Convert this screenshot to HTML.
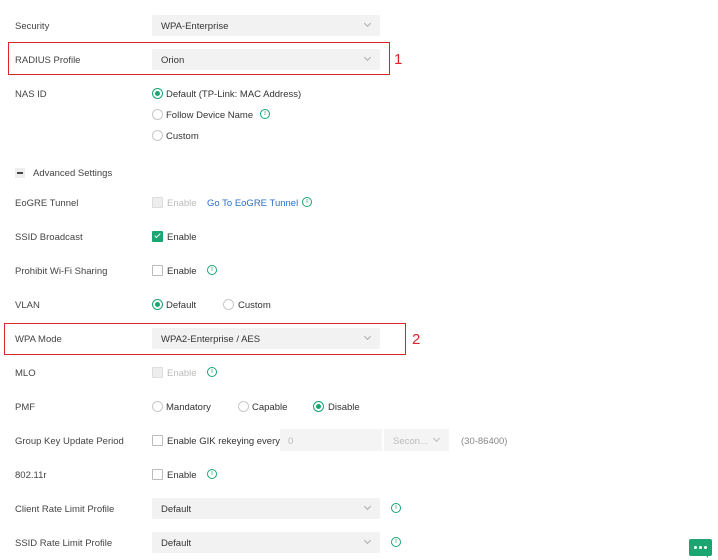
<!DOCTYPE html>
<html><head><meta charset="utf-8"><style>
body{margin:0;width:718px;height:560px;background:#fff;font-family:"Liberation Sans",sans-serif;font-size:9.5px;color:#333;position:relative;overflow:hidden}
.a{position:absolute;white-space:nowrap;line-height:12px;margin-top:1px}
.lbl{left:15px;color:#444;margin-top:2px}
.sel{position:absolute;left:152px;width:228px;height:21px;background:#f2f2f2;border-radius:2px}
.sel span{position:absolute;left:9px;top:6px;color:#333}
.sel i{position:absolute;right:10px;top:6px;width:4px;height:4px;border-right:1px solid #aaa;border-bottom:1px solid #aaa;transform:rotate(45deg)}
.r{position:absolute;width:9px;height:9px;border:1px solid #c8c8c8;border-radius:50%;background:#fff}
.r.on{border-color:#1aa571}
.r.on:after{content:"";position:absolute;left:2px;top:2px;width:5px;height:5px;border-radius:50%;background:#1aa571}
.c{position:absolute;width:9px;height:9px;border:1px solid #bbb;border-radius:1px;background:#fff}
.c.dis{background:#eee;border-color:#ddd}
.c.on{background:#1aa571;border-color:#1aa571}
.c.on:after{content:"";position:absolute;left:3px;top:0px;width:2px;height:5px;border-right:1.5px solid #fff;border-bottom:1.5px solid #fff;transform:rotate(45deg)}
.inf{position:absolute;width:8px;height:8px;border:1px solid #1aa571;border-radius:50%;color:#1aa571;font-size:7px;line-height:8px;text-align:center}
.red{position:absolute;border:1px solid #d9262c}
.num{position:absolute;color:#d9262c;font-size:15px}
.g{color:#bbb}
</style></head><body>
<div class="a lbl" style="top:19px">Security</div>
<div class="sel" style="top:15px"><span>WPA-Enterprise</span><i></i></div>
<div class="red" style="left:8px;top:42px;width:380px;height:31px"></div>
<div class="num" style="left:394px;top:51px">1</div>
<div class="a lbl" style="top:53px">RADIUS Profile</div>
<div class="sel" style="top:49px"><span>Orion</span><i></i></div>
<div class="a lbl" style="top:87px">NAS ID</div>
<div class="r on" style="left:152px;top:88px"></div><div class="a" style="left:166px;top:88px">Default (TP-Link: MAC Address)</div>
<div class="r" style="left:152px;top:109px"></div><div class="a" style="left:166px;top:109px">Follow Device Name</div><div class="inf" style="left:260px;top:109px">i</div>
<div class="r" style="left:152px;top:130px"></div><div class="a" style="left:166px;top:130px">Custom</div>
<div style="position:absolute;left:15px;top:168px;width:10px;height:10px;background:#eee"><div style="position:absolute;left:2px;top:4px;width:6px;height:2px;background:#444"></div></div>
<div class="a" style="left:33px;top:167px;color:#444">Advanced Settings</div>
<div class="a lbl" style="top:196px">EoGRE Tunnel</div>
<div class="c dis" style="left:152px;top:197px"></div><div class="a g" style="left:167px;top:197px">Enable</div><div class="a" style="left:207px;top:197px;color:#2a6fc9">Go To EoGRE Tunnel</div><div class="inf" style="left:302px;top:197px">i</div>
<div class="a lbl" style="top:230px">SSID Broadcast</div>
<div class="c on" style="left:152px;top:231px"></div><div class="a" style="left:167px;top:231px">Enable</div>
<div class="a lbl" style="top:264px">Prohibit Wi-Fi Sharing</div>
<div class="c" style="left:152px;top:265px"></div><div class="a" style="left:167px;top:265px">Enable</div><div class="inf" style="left:207px;top:265px">i</div>
<div class="a lbl" style="top:298px">VLAN</div>
<div class="r on" style="left:152px;top:299px"></div><div class="a" style="left:166px;top:299px">Default</div>
<div class="r" style="left:223px;top:299px"></div><div class="a" style="left:238px;top:299px">Custom</div>
<div class="red" style="left:4px;top:323px;width:400px;height:30px"></div>
<div class="num" style="left:412px;top:331px">2</div>
<div class="a lbl" style="top:332px">WPA Mode</div>
<div class="sel" style="top:328px"><span>WPA2-Enterprise / AES</span><i></i></div>
<div class="a lbl" style="top:366px">MLO</div>
<div class="c dis" style="left:152px;top:367px"></div><div class="a g" style="left:167px;top:367px">Enable</div><div class="inf" style="left:207px;top:367px">i</div>
<div class="a lbl" style="top:400px">PMF</div>
<div class="r" style="left:152px;top:401px"></div><div class="a" style="left:166px;top:401px">Mandatory</div>
<div class="r" style="left:238px;top:401px"></div><div class="a" style="left:252px;top:401px">Capable</div>
<div class="r on" style="left:313px;top:401px"></div><div class="a" style="left:328px;top:401px">Disable</div>
<div class="a lbl" style="top:434px">Group Key Update Period</div>
<div class="c" style="left:152px;top:435px"></div><div class="a" style="left:167px;top:435px">Enable GIK rekeying every</div>
<div style="position:absolute;left:280px;top:429px;width:102px;height:22px;background:#f4f4f4"></div><div class="a g" style="left:288px;top:435px">0</div>
<div style="position:absolute;left:384px;top:429px;width:65px;height:22px;background:#f4f4f4"></div><div class="a g" style="left:393px;top:435px">Secon...</div>
<div style="position:absolute;left:434px;top:436px;width:4px;height:4px;border-right:1px solid #bbb;border-bottom:1px solid #bbb;transform:rotate(45deg)"></div>
<div class="a" style="left:461px;top:435px;color:#888">(30-86400)</div>
<div class="a lbl" style="top:468px">802.11r</div>
<div class="c" style="left:152px;top:469px"></div><div class="a" style="left:167px;top:469px">Enable</div><div class="inf" style="left:207px;top:469px">i</div>
<div class="a lbl" style="top:502px">Client Rate Limit Profile</div>
<div class="sel" style="top:498px"><span>Default</span><i></i></div><div class="inf" style="left:391px;top:503px">i</div>
<div class="a lbl" style="top:536px">SSID Rate Limit Profile</div>
<div class="sel" style="top:532px"><span>Default</span><i></i></div><div class="inf" style="left:391px;top:537px">i</div>
<div style="position:absolute;left:689px;top:539px;width:23px;height:17px;background:#1aa571;border-radius:2px"></div>
<div style="position:absolute;left:704px;top:553px;width:0;height:0;border-left:4px solid transparent;border-top:5px solid #1aa571"></div>
<div style="position:absolute;left:694px;top:546px;width:3px;height:3px;background:#fff;border-radius:50%;box-shadow:5px 0 #fff,10px 0 #fff"></div>
</body></html>
